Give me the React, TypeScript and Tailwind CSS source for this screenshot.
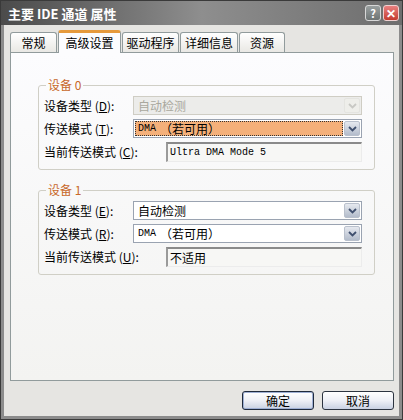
import React from 'react';

const cjk = { fontFamily: '"Noto Sans CJK SC", "Noto Sans", sans-serif' };
const mono = { fontFamily: '"Liberation Mono", "Noto Sans CJK SC", monospace' };

const DropBtn: React.FC<{ disabled?: boolean }> = ({ disabled }) => (
  <div
    className={`flex h-[15px] w-[16px] items-center justify-center rounded-[2px] border ${
      disabled ? 'border-[#e4e4e0] bg-[#eeeeea]' : 'border-[#b9c0cc] bg-gradient-to-b from-[#e6e9ef] to-[#b3bccb]'
    }`}
  >
    <svg width="9" height="6" viewBox="0 0 9 6">
      <polyline
        points="1,1 4.5,4.5 8,1"
        fill="none"
        stroke={disabled ? '#c8c8c4' : '#3f4f6e'}
        strokeWidth="1.8"
      />
    </svg>
  </div>
);

const Combo: React.FC<{ value: string; disabled?: boolean; focused?: boolean }> = ({ value, disabled, focused }) => (
  <div
    className={`flex h-[19px] flex-1 items-center gap-px border p-px ${
      disabled ? 'border-[#cfcdc4] bg-[#ececea]' : 'border-[#9aa3b1] bg-white'
    }`}
  >
    <div
      className={`flex h-full flex-1 items-center pl-[2px] text-[12px] leading-none ${
        focused ? 'border border-dotted border-[#333] bg-[#f4b07a] text-black' : 'border border-transparent'
      } ${disabled ? 'text-[#a9a89e]' : 'text-black'}`}
    >
      {value.startsWith('DMA') ? (
        <>
          <span style={mono} className="text-[10px]">DMA</span>
          <span style={cjk} className="ml-[4px]">（若可用）</span>
        </>
      ) : (
        <span style={cjk}>{value}</span>
      )}
    </div>
    <DropBtn disabled={disabled} />
  </div>
);

const Field: React.FC<{ value: string; isMono?: boolean }> = ({ value, isMono }) => (
  <div className="flex h-[20px] flex-1 items-center border-t-2 border-l-2 border-r border-b border-t-[#8a8a8a] border-l-[#9a9a9a] border-r-[#ececec] border-b-[#ececec] bg-[#f7f7f5] pl-[2px] text-[12px] leading-none text-black">
    {isMono ? (
      <span style={mono} className="text-[10px]">{value}</span>
    ) : (
      <span style={cjk}>{value}</span>
    )}
  </div>
);

const Label: React.FC<{ text: string; k: string; w: string }> = ({ text, k, w }) => (
  <div style={cjk} className={`${w} shrink-0 text-[12px] leading-none text-black`}>
    {text} (<span className="underline">{k}</span>):
  </div>
);

const Group: React.FC<{ title: string; rows: { a: string; b: string; c: string } ; keys: string[]; cls?: string }> = ({ title, rows, keys, cls }) => (
  <fieldset className={`rounded-[3px] border border-[#d0cfc6] px-[5px] pb-[7px] pt-[3px] ${cls ?? ''}`}>
    <legend style={cjk} className="ml-[2px] px-[2px] text-[12px] leading-[16px] text-[#c8682a]">
      {title}
    </legend>
    <div className="flex flex-col gap-[4px] pr-[7px]">
      <div className="flex items-center">
        <Label text="设备类型" k={keys[0]} w="w-[89px]" />
        <Combo value={rows.a} disabled={title === '设备 0'} />
      </div>
      <div className="flex items-center">
        <Label text="传送模式" k={keys[1]} w="w-[89px]" />
        <Combo value={rows.b} focused={title === '设备 0'} />
      </div>
      <div className="flex items-center">
        <Label text="当前传送模式" k={keys[2]} w="w-[122px]" />
        <Field value={rows.c} isMono={rows.c.startsWith('Ultra')} />
      </div>
    </div>
  </fieldset>
);

const tabs = [
  { t: '常规', w: 'w-[47px]' },
  { t: '高级设置', w: 'w-[63px]', on: true },
  { t: '驱动程序', w: 'w-[57px]' },
  { t: '详细信息', w: 'w-[58px]' },
  { t: '资源', w: 'w-[46px]' },
];

const App: React.FC = () => {
  return (
    <div className="h-[420px] w-[403px] overflow-hidden bg-[#3f3f3f]" style={cjk}>
      <div className="flex h-full flex-col border border-[#3a3a3a]">
        {/* title bar */}
        <div className="flex h-[24px] shrink-0 items-center bg-gradient-to-r from-[#4b4b4b] via-[#8e8e8e] to-[#6e6e6e] pl-[7px] pr-[3px]">
          <span className="flex-1 text-[13px] font-bold leading-none text-white" style={cjk}>
            主要 IDE 通道 属性
          </span>
          <div className="flex gap-[2px]">
            <div className="flex h-[16px] w-[16px] items-center justify-center rounded-[3px] border border-[#d8d8d8] bg-gradient-to-b from-[#9aa0a0] to-[#6e7474] text-[11px] font-bold leading-none text-white">
              ?
            </div>
            <div className="flex h-[16px] w-[16px] items-center justify-center rounded-[3px] border border-[#f0d0d0] bg-gradient-to-b from-[#e88080] to-[#c43a2e] text-[12px] font-bold leading-none text-white">
              ✕
            </div>
          </div>
        </div>

        {/* body */}
        <div className="flex flex-1 flex-col border-x-[3px] border-b-[3px] border-[#8c8c8c] bg-[#e6e5e2] pl-[6px] pr-[5px] pt-[5px]">
          <div className="flex items-end gap-[1px]">
            {tabs.map((tb) => (
              <div
                key={tb.t}
                className={`${tb.w} ${
                  tb.on
                    ? 'relative z-10 -mb-px h-[23px] border-t-[3px] border-t-[#e69a3c] border-x border-x-[#919b9c] bg-[#fcfcfe]'
                    : 'h-[20px] border-x border-t border-[#919b9c] bg-gradient-to-b from-white to-[#e9e8e4]'
                } flex items-center justify-center rounded-t-[3px] text-[12px] leading-none text-black`}
              >
                {tb.t}
              </div>
            ))}
          </div>
          <div className="flex h-[329px] w-[384px] flex-col border border-[#919b9c] bg-gradient-to-b from-[#fcfcfe] to-[#f3f3f1] pl-[27px] pr-[18px] pt-[24px]">
            <Group
              title="设备 0"
              keys={['D', 'T', 'C']}
              rows={{ a: '自动检测', b: 'DMA', c: 'Ultra DMA Mode 5' }}
            />
            <Group
              title="设备 1"
              cls="mt-[12px]"
              keys={['E', 'R', 'U']}
              rows={{ a: '自动检测', b: 'DMA', c: '不适用' }}
            />
          </div>
          <div className="mt-[10px] flex w-[384px] justify-end gap-[8px]">
            {['确定', '取消'].map((b, i) => (
              <div
                key={b}
                className={`flex h-[19px] w-[72px] items-center justify-center rounded-[3px] border text-[12px] leading-none text-black ${
                  i === 0 ? 'border-[#1f2a3c] shadow-[inset_0_0_0_1px_#9fb0d4]' : 'border-[#2c3440]'
                } bg-gradient-to-b from-white via-[#eef0f6] to-[#c9d1e2]`}
              >
                {b}
              </div>
            ))}
          </div>
        </div>
      </div>
    </div>
  );
};

export default App;
